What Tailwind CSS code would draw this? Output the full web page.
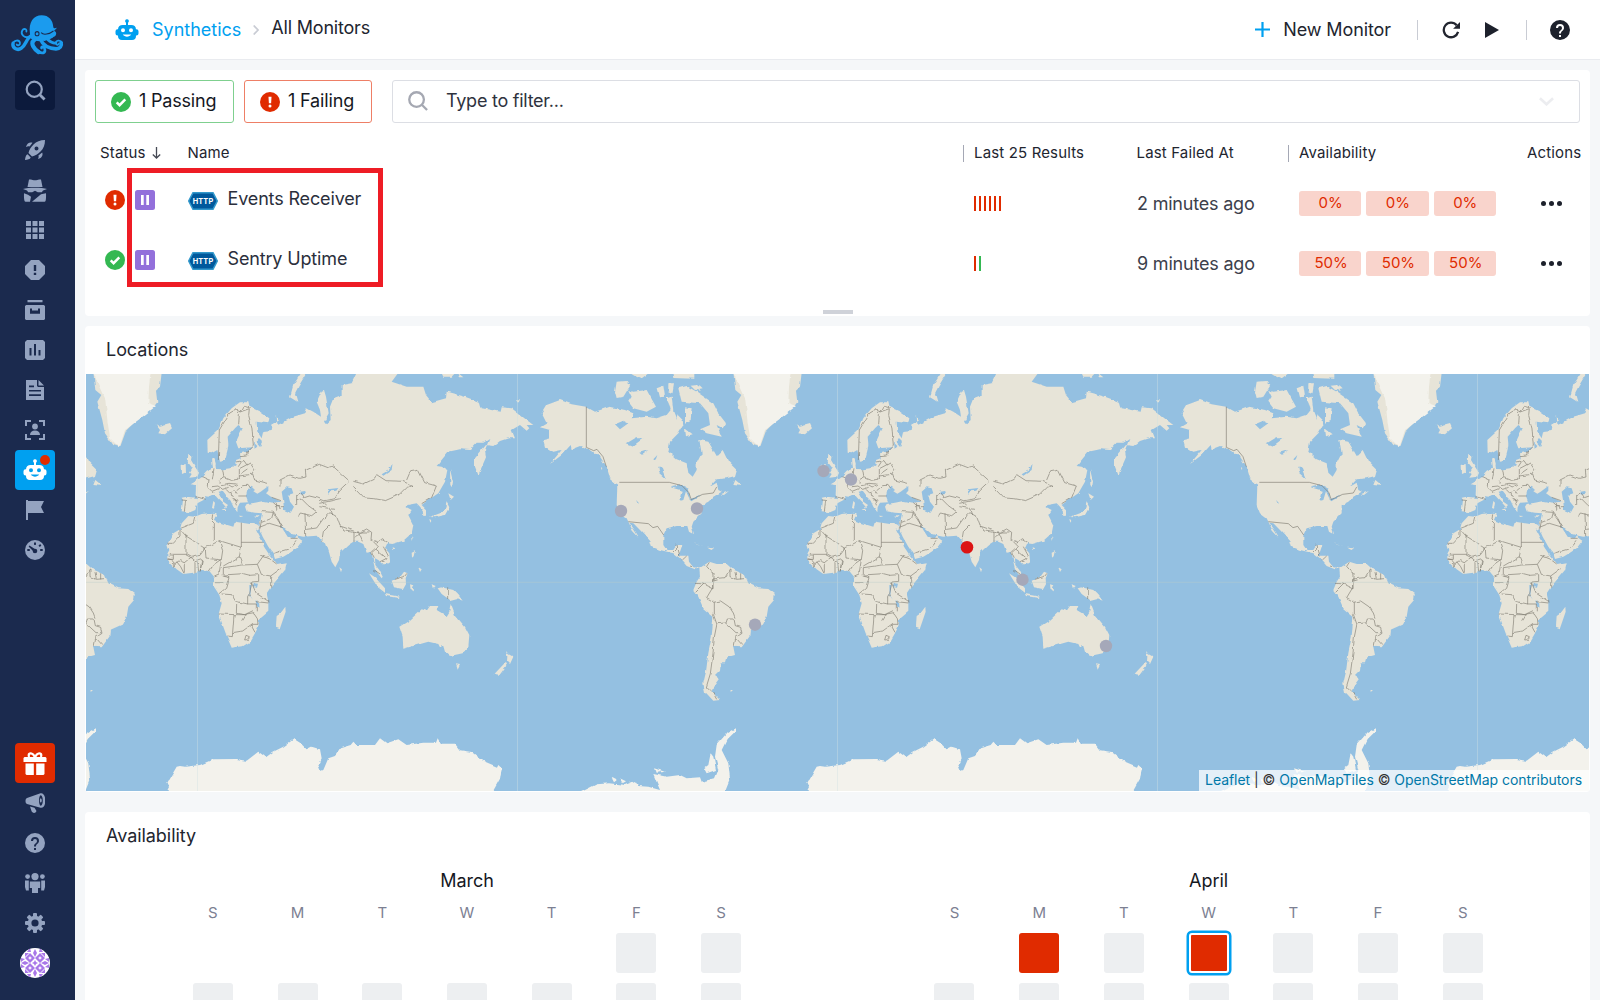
<!DOCTYPE html>
<html lang="en">
<head>
<meta charset="utf-8">
<title>Synthetics - All Monitors</title>
<script src="https://cdn.jsdelivr.net/npm/@tailwindcss/browser@4"></script>
</head>
<body class="bg-[#f5f7f9]">
<svg class="hidden">
  <symbol id="robot" viewBox="0 0 24 24"><path fill="currentColor" fill-rule="evenodd" d="M12 1.2a1.9 1.9 0 0 1 1 3.5V7h3.3A4.700 4.700 0 0 1 21 11.200h.5a2 2 0 0 1 2 2v2.300a2 2 0 0 1-2 2H21V18a4 4 0 0 1-4 4H7a4 4 0 0 1-4-4v-.5h-.5a2 2 0 0 1-2-2v-2.300a2 2 0 0 1 2-2H3A4.700 4.700 0 0 1 7.700 7H11V4.700a1.900 1.900 0 0 1 1-3.500zM8 10.300a2 2 0 1 0 0 4 2 2 0 0 0 0-4zm8 0a2 2 0 1 0 0 4 2 2 0 0 0 0-4zM7.800 16.600c2 2.700 6.400 2.700 8.400 0z"/></symbol>
  <symbol id="ok" viewBox="0 0 20 20"><circle cx="10" cy="10" r="10" fill="#34b852"/><path d="M5.700 10.300l2.900 2.900 5.700-5.800" fill="none" stroke="#fff" stroke-width="2.500"/></symbol>
  <symbol id="bad" viewBox="0 0 20 20"><circle cx="10" cy="10" r="10" fill="#e02b00"/><path d="M8.500 4.700h3l-.4 6.600H8.900z" fill="#fff"/><circle cx="10" cy="14" r="1.500" fill="#fff"/></symbol>
  <symbol id="pause" viewBox="0 0 20 20"><rect width="20" height="20" rx="2.500" fill="#9370db"/><path d="M6 5h2.700v10H6zM11.300 5H14v10h-2.700z" fill="#fff"/></symbol>
  <symbol id="http" viewBox="0 0 30 18"><path d="M5 .7h20L29.300 9 25 17.300H5L.7 9z" fill="#00599c" stroke="#3399cc" stroke-width="1.500"/><text x="15" y="11.900" text-anchor="middle" font-family="Inter,sans-serif" font-size="7.300" font-weight="700" fill="#fff" letter-spacing=".2">HTTP</text></symbol>
  <symbol id="help" viewBox="0 0 20 20"><path fill="currentColor" fill-rule="evenodd" d="M10 0a10 10 0 1 0 0 20 10 10 0 0 0 0-20zM9 15h2v2H9zm2-1.500H9c0-3.300 3-3.100 3-5.500a2 2 0 0 0-4 0H6a4 4 0 0 1 8 0c0 2.500-3 2.800-3 5.500z"/></symbol>
</svg>
<div class="flex h-[1000px] w-[1600px] overflow-hidden font-['Inter',sans-serif] text-[#22252f]">
  <!-- Sidebar -->
  <nav class="flex w-[75px] shrink-0 flex-col bg-[#1b2a4e] pb-[17px] text-[#94a3c0]">
    <div class="flex h-[70px] w-[75px] items-center justify-center">
      <svg class="h-[40px] w-[53px]" viewBox="1 1.200 51.800 37" preserveAspectRatio="none">
        <path fill="#1b9bee" d="M19.500 18C18 8 23 1.500 31 1.500c7 0 10.800 4.500 11.300 10.500.2 1.500 1.500 1.700 3.700 1l-3 3c3 .5 3 4-.5 6l-6 2.500c-6 2-13 1-15.500-1-1-1-1.300-3-1.500-5.500z"/>
        <circle cx="26.500" cy="18.500" r="1.900" fill="#1b9bee" stroke="#1b2a4e" stroke-width="1"/>
        <path d="M30.500 17.500c2 2.500 8 1.500 12-1.500M29.500 25c5 1.500 10 .5 14-3.500" fill="none" stroke="#1b2a4e" stroke-width="1"/>
        <g fill="none" stroke="#1b9bee" stroke-linecap="round" stroke-linejoin="round">
          <path stroke-width="3.300" d="M22 20c-6 1.500-6 9-11 12-4 2.500-9-.5-8-4.500"/>
          <path stroke-width="1.700" d="M3 28c.5-3.500 6-4.500 6.800-1 .3 2-2.300 3-3.200 1.500M20 21c-6 2.500-10-2-8-5.500 1.500-2.500 5-1 4 1"/>
          <path stroke-width="4" d="M24 24c-5 3.500 0 9 4 11.500"/><path stroke-width="2.600" d="M28 35c3 2 7 2 6-2.500-.4-2.300-3-2.500-3.200-.8"/>
          <path stroke-width="3.500" d="M30 24c2 5 8 8 15 8.500 4 0 6-3 5-5.500"/><path stroke-width="1.700" d="M51 27c-1.500-3.200-7-2.500-6 .7.600 1.700 3 1.200 3-.3"/>
          <path stroke-width="2.600" d="M37 24c3 2.500 6 3.500 8 3"/>
        </g>
      </svg>
    </div>
    <div class="ml-[15px] flex size-10 items-center justify-center rounded bg-[#0c1a3c]">
      <svg class="size-[21px]" viewBox="0 0 22 22" fill="none" stroke="currentColor"><circle cx="9.700" cy="9.700" r="7.900" stroke-width="2.300"/><path d="M15.500 15.500l5 5" stroke-width="3"/></svg>
    </div>
    <div class="mt-5 ml-[15px] flex w-10 flex-col [&>div]:flex [&>div]:size-10 [&>div]:items-center [&>div]:justify-center [&_svg]:fill-current">
      <div><svg class="size-5" viewBox="0 0 20 20"><path fill-rule="evenodd" d="M20 0c-5 0-8.500 1.500-11.500 4.500C6 7 4 10 3.500 13L7 16.500c3-.5 6-2.500 8.500-5C18.500 8.500 20 5 20 0zM11.500 6.500a2 2 0 1 1 0 4 2 2 0 0 1 0-4zM7.500 2.800C5 1.800 2 3 1 7c1.600-.8 2.800-.8 3.600-.4zM17.200 12.500c1 2.500-.2 5.500-4.200 6.500.8-1.600.8-2.800.4-3.600zM2.600 14.300C.7 15 .4 17.500 0 20c2.500-.4 5-.7 5.700-2.600z"/></svg></div>
      <div><svg class="h-[23px] w-6" viewBox="0 0 24 23"><path fill-rule="evenodd" d="M6 .5h2c1.500 1 6.500 1 8 0h2l1.500 7.500h-15zM0 10c5-1.700 19-1.700 24 0l-4 1.400-1.200 1.800h-4L12 11.800l-2.800 1.400h-4L4 11.400zM1 14.300l4 1.500 3 2-1 5H2.500c-1.200 0-1.700-3-1.500-8.500zM23 14.300l-5 1-9 7.500h12.700c1.200 0 1.500-3 1.300-8.500z"/></svg></div>
      <div><svg class="size-5" viewBox="0 0 20 20"><path d="M1 1h5v5H1zM7.500 1h5v5h-5zM14 1h5v5h-5zM1 7.500h5v5H1zM7.500 7.500h5v5h-5zM14 7.500h5v5h-5zM1 14h5v5H1zM7.500 14h5v5h-5zM14 14h5v5h-5z"/></svg></div>
      <div><svg class="size-5" viewBox="0 0 20 20"><path fill-rule="evenodd" d="M6 0h8l6 6v8l-6 6H6l-6-6V6zM8.800 5v6h2.400V5zm0 7.700V15h2.400v-2.300z"/></svg></div>
      <div><svg class="size-5" viewBox="0 0 20 20"><path fill-rule="evenodd" d="M2.500 0h15v2.200h-15zM1.200 5h17.600L20 6v13l-1 1H1l-1-1V6zM5 8.500v5.200h10V8.500h-2v2H7v-2z"/></svg></div>
      <div><svg class="size-5" viewBox="0 0 20 20"><path fill-rule="evenodd" d="M2 0h16l2 2v16l-2 2H2l-2-2V2zM4.500 8v7.500h2V8zM9 4v11.500h2V4zM13.500 10v5.500h2V10z"/></svg></div>
      <div><svg class="size-5" viewBox="0 0 20 20"><path fill-rule="evenodd" d="M1 0h11v6l1 1h6v13H1zM13.500 0L19 5.500h-5.500zM4 5.500v1.700h5V5.500zm0 4.500v1.600h12V10zm0 4.300V16h12v-1.700z"/></svg></div>
      <div><svg class="size-5" viewBox="0 0 20 20"><path d="M0 0h6v2H2v4H0zM14 0h6v6h-2V2h-4zM0 14h2v4h4v2H0zM18 14h2v6h-6v-2h4z"/><circle cx="10" cy="6.500" r="2.900"/><path d="M5 15c0-3 2-4.500 5-4.500s5 1.500 5 4.500z"/></svg></div>
      <div class="relative rounded bg-[#00a0f0] text-white"><svg class="size-6"><use href="#robot"/></svg><span class="absolute top-[5px] left-[25px] size-[10px] rounded-full bg-[#e02b00]"></span></div>
      <div><svg class="size-5" viewBox="0 0 20 20"><path d="M1 0h2v1h16l-3 6 3 6H3v7H1z"/></svg></div>
      <div><svg class="size-5" viewBox="0 0 20 20"><circle cx="10" cy="10" r="10"/><g fill="#1b2a4e"><circle cx="10" cy="11" r="2.300"/><path d="M9 12L3.600 6.400l.9-.9L11 9.800z"/><rect x="9" y="2.500" width="2" height="2.400"/><rect x="2.300" y="9" width="2.500" height="2"/><rect x="15.200" y="9" width="2.500" height="2"/><path d="M13.500 5.700l1.600-1.600 1.300 1.300-1.600 1.600z"/></g></svg></div>
    </div>
    <div class="mt-auto ml-[15px] flex w-10 flex-col [&>div]:flex [&>div]:size-10 [&>div]:items-center [&>div]:justify-center [&_svg]:fill-current">
      <div class="rounded bg-[#e02b00] text-white"><svg class="size-6" viewBox="0 0 24 24"><path fill-rule="evenodd" d="M5 6C3 1 9-.5 12 4c3-4.500 9-3 7 2h3.500l1 1v4H.5V7l1-1zm2 0h3.500C9.500 3 6 2.500 7 6zm10 0c1-3.500-2.500-3-3.500 0zM2.500 12.500h8.300V24H3.500l-1-1zM13.200 12.500h8.300V23l-1 1h-7.300z"/></svg></div>
      <div><svg class="size-5" viewBox="0 0 20 20"><path fill-rule="evenodd" d="M2 5L15.500.2C22-.8 22 16 15.500 14.800L2 11C0 10.500 0 5.600 2 5zm13.700-2.700c-2.200 0-2.200 10.400 0 10.400 2.800 0 2.800-10.400 0-10.400zm-.2 3c1.700 0 1.700 4.200 0 4.200-.8-1-.8-3.200 0-4.200zM5 13.500l4.500 1.300 2 3.200c-1 3-4.500 2-5 0z"/></svg></div>
      <div><svg class="size-5"><use href="#help"/></svg></div>
      <div><svg class="size-5" viewBox="0 0 20 20"><circle cx="10" cy="3.600" r="3.600"/><circle cx="2.600" cy="3.600" r="2.400"/><circle cx="17.400" cy="3.600" r="2.400"/><path d="M4.800 8.500h10.400V15H13v5H7v-5H4.800zM0 7.500h3.800V17.500H1L0 14zM16.200 7.500H20V14l-1 3.500h-2.800z"/></svg></div>
      <div><svg class="size-5" viewBox="0 0 20 20"><g><rect x="8" width="4" height="20" rx="1"/><rect x="8" width="4" height="20" rx="1" transform="rotate(45 10 10)"/><rect x="8" width="4" height="20" rx="1" transform="rotate(90 10 10)"/><rect x="8" width="4" height="20" rx="1" transform="rotate(135 10 10)"/><circle cx="10" cy="10" r="7.300"/></g><circle cx="10" cy="10" r="3.600" fill="#1b2a4e"/></svg></div>
      <div><svg class="size-[30px] rounded-full bg-white" viewBox="0 0 30 30"><g fill="#a877e8"><path d="M10 5l5 5-5 5-5-5zM20 5l5 5-5 5-5-5zM10 15l5 5-5 5-5-5zM20 15l5 5-5 5-5-5z"/><path d="M5 5l4 0-4 4zM25 5h-4l4 4zM5 25h4l-4-4zM25 25h-4l4-4zM15 1l2 4-2 4-2-4zM15 21l2 4-2 4-2-4zM1 15l4-2 4 2-4 2zM21 15l4-2 4 2-4 2zM15 12l1 2 2 1-2 1-1 2-1-2-2-1 2-1zM1 10l4 1-4 3zM29 10l-4 1 4 3zM1 20l4-1-4-3zM29 20l-4-1 4-3zM10 0l1 4-4 0zM20 0l-1 4h4zM10 30l1-4H7zM20 30l-1-4h4z"/></g><g fill="#fff"><path d="M10 8l.7 1.300L12 10l-1.300.7L10 12l-.7-1.300L8 10l1.300-.7zM20 8l.7 1.300L22 10l-1.300.7L20 12l-.7-1.300L18 10l1.300-.7zM10 18l.7 1.300L12 20l-1.300.7L10 22l-.7-1.300L8 20l1.300-.7zM20 18l.7 1.300L22 20l-1.300.7L20 22l-.7-1.300L18 20l1.300-.7z"/></g></svg></div>
    </div>
  </nav>

  <div class="flex min-w-0 flex-1 flex-col">
    <!-- Header -->
    <header class="flex h-[60px] shrink-0 items-center border-b border-[#e9ebef] bg-white pr-[30px] pl-10 text-[18px] tracking-[-0.1px]">
      <svg class="size-6 text-[#00a0f0]"><use href="#robot"/></svg>
      <span class="ml-[13px] tracking-[0px] text-[#00a0f0]">Synthetics</span>
      <svg class="ml-3 h-[10px] w-[6px]" viewBox="0 0 6 10" fill="none" stroke="#c9ccd4" stroke-width="1.700"><path d="M.7.500L5 5 .7 9.500"/></svg>
      <span class="mb-[4px] ml-3 tracking-[-0.200px]">All Monitors</span>
      <svg class="ml-auto size-[15px]" viewBox="0 0 15 15" stroke="#00a0f0" stroke-width="2.200"><path d="M7.500 0v15M0 7.500h15"/></svg>
      <span class="ml-[13px]">New Monitor</span>
      <span class="ml-[26px] h-5 w-px bg-[#c9ccd4]"></span>
      <svg class="ml-6 size-[18px]" viewBox="0 0 19 19"><path d="M17 11.500A7.700 7.700 0 1 1 15.500 4.500" fill="none" stroke="#22252f" stroke-width="2.400"/><path d="M19 1v7.300h-7.300z" fill="#22252f"/></svg>
      <svg class="ml-[25px] h-4 w-[14px]" viewBox="0 0 14 16"><path d="M0 0L14 8 0 16z" fill="#1d212c"/></svg>
      <span class="ml-[27px] h-5 w-px bg-[#c9ccd4]"></span>
      <svg class="ml-[23px] size-5 text-[#1d212c]"><use href="#help"/></svg>
    </header>

    <main class="flex flex-col pt-[10px] pl-[10px]">
      <!-- Monitor list -->
      <section class="relative h-[246px] w-[1505px] rounded bg-white">
        <div class="flex h-[53px] items-end pl-[10px] text-[18px] text-[#15181f]">
          <div class="flex h-[43px] w-[139px] items-center rounded-[3px] border border-[#7fd08f] pb-[2px] pl-[15px] tracking-[-0.200px]"><svg class="mt-[2px] mr-2 size-5"><use href="#ok"/></svg>1 Passing</div>
          <div class="ml-[10px] flex h-[43px] w-[128px] items-center rounded-[3px] border border-[#ee7f66] pb-[2px] pl-[15px] tracking-[-0.150px]"><svg class="mt-[2px] mr-2 size-5"><use href="#bad"/></svg>1 Failing</div>
          <div class="ml-5 flex h-[43px] w-[1188px] items-center rounded-[3px] border border-[#dcdee4] pr-[25px] pb-[2px] pl-[15px] tracking-[-0.250px] text-[#2f333e]"><svg class="mt-px mr-[18px] size-5" viewBox="0 0 21 21" fill="none" stroke="#a5a8b2" stroke-width="2.400"><circle cx="9" cy="9" r="7.700"/><path d="M14.500 14.500l5.500 5.500"/></svg>Type to filter...<svg class="mt-[2px] ml-auto h-[9px] w-[15px]" viewBox="0 0 16 9" fill="none" stroke="#ecedf0" stroke-width="2.800"><path d="M1 1l7 6.500L15 1"/></svg></div>
        </div>
        <div class="grid h-[60px] grid-cols-[87px_787px_162px_163px_198px_1fr] items-center pl-[15px] text-[15px] tracking-[0.150px]">
          <div class="flex items-center">Status<svg class="ml-[6px] h-3 w-[9px]" viewBox="0 0 9 12" fill="none" stroke="#454954" stroke-width="1.300"><path d="M4.500 0v11M.8 7.500L4.500 11l3.700-3.500"/></svg></div>
          <div class="flex items-center justify-between pl-[0.500px]">Name<span class="mr-[10px] h-[17px] w-px bg-[#a5a8b5]"></span></div>
          <div>Last 25 Results</div>
          <div class="flex items-center justify-between pl-[0.500px]">Last Failed At<span class="mr-[10px] h-[17px] w-px bg-[#a5a8b5]"></span></div>
          <div>Availability</div>
          <div class="pl-[30px]">Actions</div>
        </div>
        <div class="grid h-[60px] grid-cols-[82px_787px_162px_163px_198px_1fr] pl-5 text-[18px] text-[#3c404b] [&>div]:flex">
          <div class="gap-[10px] pt-[7px]"><svg class="size-5"><use href="#bad"/></svg><svg class="size-5"><use href="#pause"/></svg></div>
          <div class="pt-[2px] tracking-[-0.150px] text-[#2b2f3c]"><svg class="mt-[7px] mr-[9.500px] ml-[1px] h-[18px] w-[30px]"><use href="#http"/></svg>Events Receiver</div>
          <div class="gap-[3px] pt-[13px] [&>i]:h-[15px] [&>i]:w-[2px] [&>i]:bg-[#e02b00]"><i></i><i></i><i></i><i></i><i></i><i></i></div>
          <div class="pt-[7px] pl-[1px] tracking-[-0.200px]">2 minutes ago</div>
          <div class="gap-[5px] pt-2 text-[15px] text-[#e02b00] [&>b]:h-[25px] [&>b]:w-[62.300px] [&>b]:rounded-[3px] [&>b]:bg-[#f9d4cc] [&>b]:pl-px [&>b]:text-center [&>b]:leading-6 [&>b]:font-normal"><b>0%</b><b>0%</b><b>0%</b></div>
          <div class="gap-[3px] pt-[18px] pl-11 [&>i]:size-[5px] [&>i]:rounded-full [&>i]:bg-[#1d212c]"><i></i><i></i><i></i></div>
        </div>
        <div class="grid h-[60px] grid-cols-[82px_787px_162px_163px_198px_1fr] pl-5 text-[18px] text-[#3c404b] [&>div]:flex">
          <div class="gap-[10px] pt-[7px]"><svg class="size-5"><use href="#ok"/></svg><svg class="size-5"><use href="#pause"/></svg></div>
          <div class="pt-[2px] tracking-[-0.150px] text-[#2b2f3c]"><svg class="mt-[7px] mr-[9.500px] ml-[1px] h-[18px] w-[30px]"><use href="#http"/></svg>Sentry Uptime</div>
          <div class="gap-[3px] pt-[13px]"><i class="h-[15px] w-[2px] bg-[#e02b00]"></i><i class="h-[15px] w-[2px] bg-[#34b852]"></i></div>
          <div class="pt-[7px] pl-[1px] tracking-[-0.200px]">9 minutes ago</div>
          <div class="gap-[5px] pt-2 text-[15px] text-[#e02b00] [&>b]:h-[25px] [&>b]:w-[62.300px] [&>b]:rounded-[3px] [&>b]:bg-[#f9d4cc] [&>b]:pl-[2px] [&>b]:text-center [&>b]:leading-6 [&>b]:font-normal"><b>50%</b><b>50%</b><b>50%</b></div>
          <div class="gap-[3px] pt-[18px] pl-11 [&>i]:size-[5px] [&>i]:rounded-full [&>i]:bg-[#1d212c]"><i></i><i></i><i></i></div>
        </div>
        <div class="mx-auto mt-[7px] h-[4px] w-[30px] bg-[#cfd2d9]"></div>
        <div class="absolute top-[98px] left-[42px] h-[119px] w-64 border-5 border-[#ee1c25]"></div>
      </section>

      <!-- Locations map -->
      <section class="mt-[10px] h-[466px] w-[1505px] rounded bg-white px-px">
        <h2 class="h-12 pl-5 text-[18px] leading-[48px] tracking-[-0.050px]">Locations</h2>
        <div class="relative h-[417px] w-[1503px] overflow-hidden bg-[#94c0e1]">
          <svg class="block h-[417px] w-[1503px]" viewBox="0 0 1503 417">
            <defs>
              <filter id="coast" x="-5%" y="-5%" width="110%" height="110%"><feTurbulence type="fractalNoise" baseFrequency=".13" numOctaves="2" seed="4"/><feDisplacementMap in="SourceGraphic" scale="3.200" xChannelSelector="R" yChannelSelector="G"/></filter>
              <g id="world">
                <g filter="url(#coast)">
                <!-- Europe, Asia, Africa, Oceania -->
                <g transform="translate(694 -4) scale(.33333)">
                  <g fill="#e7e4d8">
                    <path d="M152 343L168 345 167 375 172 384 140 380 125 383 129 390 125 424 150 427 166 420 172 400 195 388 192 378 205 380 222 372 233 385 245 397 258 412 264 405 250 395 240 378 233 365 246 362 258 378 272 392 280 410 292 427 293 412 300 398 325 397 318 378 322 362 335 350 345 360 340 364 352 371 362 365 385 348 385 362 378 370 395 382 425 395 400 398 370 393 345 398 320 402 315 410 320 424 345 428 366 430 362 450 357 475 368 500 385 530 400 552 405 567 430 560 450 548 470 535 487 512 470 500 465 508 445 503 430 480 425 470 435 475 455 492 475 497 490 500 530 497 545 515 558 520 568 550 575 575 586 592 597 570 600 548 625 525 640 515 655 515 670 522 680 548 695 545 700 575 704 592 712 608 725 625 728 620 718 600 706 585 705 565 715 570 730 585 750 572 748 550 735 535 742 520 757 522 790 512 815 490 820 465 805 435 815 420 800 412 802 405 818 402 830 400 838 408 848 420 850 438 858 437 858 418 845 405 865 390 895 370 915 335 922 300 905 290 890 288 925 245 960 238 990 240 1010 218 1030 218 1048 207 1035 240 1038 262 1015 315 1005 290 1005 265 1038 225 1060 228 1080 213 1105 205 1125 205 1115 180 1140 165 1160 182 1168 175 1160 165 1180 165 1160 150 1115 115 1085 112 1082 125 1025 115 1020 97 975 80 920 65 918 85 875 97 858 75 850 50 800 50 755 35 775 8 650 8 635 40 605 45 605 75 580 85 570 110 572 150 558 163 552 155 566 130 558 80 552 60 545 62 530 95 540 120 543 140 520 125 500 115 495 130 460 140 425 160 412 165 410 135 418 150 398 165 395 180 370 183 365 205 352 185 350 155 385 160 388 145 360 125 328 110 325 97 300 97 275 115 250 145 235 180 202 210 203 248 215 250 232 240 240 275 255 272 262 245 265 222 263 200 285 175 295 165 308 175 300 190 288 215 295 235 335 232 322 245 300 250 302 265 288 270 290 285 280 293 250 298 228 297 224 265 217 270 219 295 200 305 185 322 165 335z"/>
                    <path d="M145 438L165 440 185 432 220 428 230 430 222 450 240 458 280 470 285 455 330 462 345 462 357 468 356 480 347 475 365 510 372 530 385 550 400 568 412 582 440 577 435 600 410 630 390 655 380 670 385 695 385 722 358 745 355 770 345 790 330 815 310 828 275 833 260 798 248 765 236 732 245 700 238 675 222 650 222 620 208 603 185 600 160 608 130 612 110 598 92 580 82 568 82 552 88 540 82 522 100 490 120 478 125 460z"/>
                    <path d="M436 710l1 15-17 50-12-5 2-35 15-10zM145 250l10 8-2 12 12 20 12 18-5 12-24 3 7-11-5-4 8-13-8-10-7-10zM125 285l12-3 1 25-12 5zM47 163l13 7 30-8 6 13-21 18-20-3 5-10zM484 8l16 0-25 42-10 20 7 25-22-13 10-37zM905 10h40l-10 10h-25zM955 10l15 12h-10zM687 610l18 12 30 33v13l-23-18zM735 672l45 8-5 4-37-6zM755 632l25-10 12-17 11 5-6 15 1 15-10 17-26-5zM810 643l10 3-4 6 4 12-8-4zM815 545l10-4-4 18-5 4zM835 592l10 6-5 8zM814 503l4 0-3 10zM755 532l8 3-6 5zM598 592l8 6-3 9zM875 643l12 5-8 8zM893 655l12-3 35 8 15 15 13 17-18-7-20 5-25-18zM925 370l17 10-10 10zM920 397l8 15-13 23-30 7-15-1 30-11 14-12zM868 447l7 4-4 7zM930 298l9 37-3 17-5-7zM217 268l6-3 4 18-8 8zM245 415l15-2-2 9zM220 393l5 5-3 18-6-2zM296 437l14 1-8 3zM345 437l14-2-6 6z"/>
                    <path d="M932 702l13 33 30 35 13 25-3 35-17 20-38 8-15-13-7-23-8 10-5-10-30-7-35 10-40 11-2-36-10-30 32-20 35-32 15 4 10-14h25l-5 12 30 18 8-13zM948 880l12 2-7 14zM1098 843l8 10 14 7-10 22-9-9 1-14zM1095 878l4 9-22 30-16-3z"/>
                  </g>
                  <path fill="#94c0e1" d="M425 365l15-13 15 3 5 15-15 5 5 20 12 15-10 18-20-8-2-25zM758 278l-3 22-25 17-5-4 22-13zM563 358l32-4-6 8-17 2-7 11zM478 362l14-2 3 12-12 2zM342 215l10 10-8 12zM354 204l12 12-6 12-7-8zM328 645l6 0-3 32 8 12-10-12zM342 640l12 1-3 12-12-2zM350 690l7 6 2 20-6-4z"/>
                  <path fill="#f3f2ec" d="M75 1275l15-30-8-7 28-48 10-2 15 2 45-5 40-17 70-1 30 5 35-27 23 17 22-17 30-15 32-23 18 11 20 20 15-8 25 8 5 27-10 20 7 18 8-3 15-35 20-7 15-23 32-10 8-10 10 10h55l15-20 20 15 35-12 25 17 50-7h38l5-13 9 16h43l15 20 35 5 35 27 55 23-5 30-28 50z"/>
                </g>
                <!-- Americas -->
                <g transform="translate(414 -4) scale(.33333)">
                  <g fill="#e7e4d8">
                    <path d="M140 105L180 90 215 103 258 110 285 125 330 110 375 120 400 130 395 145 440 140 470 145 500 135 512 120 500 85 515 80 520 125 530 150 528 130 548 150 550 165 535 190 510 215 505 245 530 268 560 280 565 308 578 320 590 300 590 280 605 250 598 210 625 215 640 240 650 258 668 240 685 275 710 300 705 318 680 325 650 328 630 350 650 338 655 360 665 365 640 380 625 395 605 405 605 430 580 455 575 470 582 492 570 485 565 468 530 468 500 475 490 495 490 525 500 540 520 540 530 525 547 525 540 545 535 557 565 557 567 575 580 592 600 595 585 598 560 588 540 565 520 550 480 540 455 530 450 512 425 485 400 460 388 458 400 475 418 503 398 482 380 445 360 430 350 405 352 345 330 325 320 290 300 260 265 238 240 228 215 238 212 225 185 255 150 282 185 240 160 245 135 230 130 210 150 205 150 180 120 172 140 160 125 130z"/>
                    <path d="M598 595l30-20 22 7h30l20 18 35 15 10 25 30 15 30 2 20 15-3 18-17 20-5 30-10 22-40 18-2 20-23 32-25-2 5 25-25 7-5 18h-13l-2 20-15 15 13 10-18 25-5 15 25 25-20 2-25-27-5-25 8-35 7-55 10-50 5-60-30-25-15-35-15-20 10-25 10-15z"/>
                    <path d="M535 55l25-7 30 17 50 35 15 30 23 30-10 15-18-10 15 35-45-10-20-12 30-13-5-35-25-30-55-5zM572 47l20-2 10 18-18-4zM385 60l15 5 40-5 28 50-28 15-40-10-15-20 10-15zM350 35l30-2 10 15-20 32-20 4-5-19zM520 8h63v18l-60-2zM388 8h60l-25 18-20-9zM505 40l17 0-5 30-12-6zM470 55l20-8 5 33-18 2zM555 112l20 3-3 35-17 8zM555 175l23 18-20 6zM598 45l10 10-12 2zM706 330l22 18-28-3zM662 373l25-10-15 12zM580 517l28 10-20-8zM622 533l20 2-8 5zM687 960h12l-6 5zM48 88l12 0-6 7zM345 340l-15-12 5-3 22 20zM303 292l4 8-3 2z"/>
                    <path d="M700 8h205l-5 42-12 12 4 35-12 15 8-5-60 45-30 30-18 50-20-7-25-35-8-40-15-55 12-20-18-15z"/>
                  </g>
                  <path fill="#f3f2ec" d="M700 8l18 42 18 40 6 60 8 55 28 27 17-52 40-30 53-42-23-8 2-50 5-42zM225 1275l65-32 40-3 45 5 30-12 10 15 30 2 35 10-20-48 40 8 40-5 20 10 40-3 5 13 40-10 10-25-10-40 5-35 30-35 25-15v10l-25 25-15 30 20 40 5 45-20 50zM632 1150l8 10 8 40-28 10-8-15 13-10zM465 1195l33 10-28 3zM335 1223l15 8-8 6zM358 1224l20 10-10 6zM-15 1205l10-20 10 10-4 22z"/>
                  <path fill="#94c0e1" d="M345 163l25-11 15 8-25 18zM380 220l25-15h25l-30 22zM418 248l27-8-20 14zM460 268l12-13-6 18zM475 290h8l15 37-20-17zM512 352l33-7 22 12 3 33-12-26-8 26-9 2 7-30zM568 388l36-12-30 18zM408 390l8 8-2 5zM505 95l6 20-5 5z"/>
                </g>
                <!-- Country borders of Eurasia and Africa -->
                <g transform="translate(694 -4) scale(.33333)" fill="none" stroke="#77736a" stroke-opacity=".6" stroke-width="3" stroke-linejoin="round">
                  <path d="M235 270l3-90 30-50 20-12 12 8 28-10-2 20 10 40 4 50-22 22M284 118l14 15-2 30M299 126l10-18 18 5M125 390l12 1-4 34M167 380l30 8M185 320l22 10-3 22 12 12 20-8M222 298l-5 30M248 298l4 25-15 8M252 322l22 9 24-4v-30M235 332l12 12 20-4 20 2M216 350l18-2 14 10 18-6M262 342l16 10 16-10M258 358l12 12 12-8 10 8M272 368l8 22 14 4M283 385l6 24M295 378h25M290 362l18-15 16-1 8 12M298 318l40-6 6 18 40 10M300 295l30-16 14 20-10 14M290 276l22-4 8 12M295 290l10-16M300 260l20-2 2-15M300 312l22-15M395 382l28 10M400 398l22 18M405 410l28 0M410 398l0 24"/>
                  <path d="M420 350l0-20 30-15 30 10 18-4-2-20 42-18 26 10 14-5 50 45-30 28-15 25-30 6-20-8-25-6-15 5-10-16-13 6v32M640 334l30 8 30-14 10-14 28 18 50 2 28 12-14 6-20 20-46 20-32-6-30-2-34-35M800 330l12-28 22-4 20 40 35 10-14 35-30 18M470 392l15-5 20 20 25 18-15 12-34-8-5 8M495 430l2 70M500 478l30-4 20-28 20-18 20 12 10 28 52 18 36 0M545 515l5-30 20-20M600 468l12 15 40 5M642 486l0 30M655 486l12 28M645 505l20-20 15-8 15 10-2 22 22 8M700 515l15 15-20 18 8 15M705 535l35 30-20 10M710 520l15-12 20 12M730 530l15 28M538 400l65-14M540 390l20 15M535 410l50 8M570 410l8 25M365 425l35 2-5 18-30 12M400 430l28 42-40-12-30 12M425 472l-12-30-15-20M365 450l-6 28M400 550l42-12 18-12 8-12M455 508l18 0M765 628l28-8 8-10M923 652v37M700 598l20 14"/>
                  <path d="M165 440l-5 20-38 15M100 520h-18M120 478l18 20v55h-45l-6 4M120 478l0 20-20 22M138 498l58 36 42-22 66 20M215 430l-2 20 10 10v52M304 458v74M304 517h64M196 534l-16 22-28 6-15-8M196 534l2 30 45 6M238 512l10 30-6 40-5 30-14 6M304 530l-6 30-48 28M298 560l10 25-58 8 0 20M308 585l44-2 20-28 14 4M352 583l12 30 28 5 30-22M360 555l30 12 20 15M250 615l60-4 20 5M245 615l22 5-10 35-20 16M225 638l25 0M328 616l28-2 0 20-20 2-8 38M392 618v35M335 640l14 30 38 25 0 3M245 672l30 2 12 20 36 8 0-22 10-5M290 702l-1 28 25 4 25-12M236 732l52 2 30 0M282 735l-5 65-15-2M278 788l30-5 28-20 18 0-2-20-10-15-22 4-12 20M333 765l12 22M322 702l30 0 0 22M350 695l35 4M314 810l4-14 10 4-6 9zM110 575l12 15 10 20M83 566l15 4 8 10 12-8 15 6 0 30M133 578l20-16 12 10 20-6-4 38M165 575l0 32M172 572l4 32M188 568l-8 36M96 580l10 2-5 8M208 603l14-20 20-14M330 640l6-2M86 558h14v10h-18"/>
                </g>
                <!-- Country borders of South America -->
                <g transform="translate(414 -4) scale(.33333)" fill="none" stroke="#77736a" stroke-opacity=".6" stroke-width="3">
                  <path d="M628 577l-8 12 10 12 12 8 0 24 12-4M585 640l24 2 30 15 0-30 36-4 14-24M609 642l-22 22M638 628l0 25-18 30 14 8 6 5M690 600l0 20 20 8 22-2M705 606l4 20M722 610l0 18M640 697l22-4 26 18 12 18 5 14M643 697v36M640 733l10 28 28-2 4-12 20 0 4 20 16 5 4 18-18 12-6 28M678 760l30 28 16 0M706 802l20 22M651 761l-8 40-4 50-8 60-12 40 14 14M638 966l12 22M520 548l10-10-2-14M535 540l5 20M545 572l15-14M570 588l6 2"/>
                </g>
                </g>
                <g transform="translate(414 -4) scale(.33333)" fill="none" stroke="#77736a" stroke-opacity=".6" stroke-width="3">
                  <path d="M259 110v122l22 10 10-4 18 22 10 30M358 337h150l38 10 20 20 8 22 34-16 32-4 10-18M385 455l60 6 14 12 14-4 18 26"/>
                </g>
                <path d="M751.500 0v417M431.500 0v417" stroke="#cfe0e3" stroke-opacity=".4" fill="none"/>
              </g>
            </defs>
            <use href="#world" x="-1280"/><use href="#world" x="-640"/><use href="#world"/><use href="#world" x="640"/>
            <path d="M0 208.300H1503" stroke="#b9ccc9" stroke-opacity=".4"/>
            <g fill="#a5a8b9"><circle cx="535" cy="137" r="6.200"/><circle cx="611" cy="134.500" r="6.200"/><circle cx="669" cy="250.700" r="6.200"/><circle cx="737.500" cy="97" r="6.200"/><circle cx="765" cy="105.500" r="6.200"/><circle cx="936.500" cy="205.700" r="6.200"/><circle cx="1020" cy="272" r="6.200"/></g>
            <circle cx="881" cy="173.300" r="6.300" fill="#dc1414"/>
          </svg>
          <div class="absolute right-0 bottom-0 h-[21px] w-[390px] bg-white/75 pl-[6px] text-[14px] leading-[20px] tracking-[-0.040px] whitespace-nowrap text-[#333] [&>a]:text-[#0078a8]"><a>Leaflet</a> | © <a>OpenMapTiles</a> © <a>OpenStreetMap contributors</a></div>
        </div>
      </section>

      <!-- Availability calendar -->
      <section class="mt-5 h-[200px] w-[1505px] overflow-hidden rounded bg-white">
        <h2 class="h-[54px] pl-[21px] text-[18px] leading-[48px] tracking-[-0.050px]">Availability</h2>
        <div id="months" class="flex gap-[148.600px] pl-[85.500px]"></div>
      </section>
    </main>
  </div>
</div>
<script>
const months = [
  { name: 'March', first: ['', '', '', '', '', 'n', 'n'] },
  { name: 'April', first: ['', 'f', 'n', 'today', 'n', 'n', 'n'] },
];
const look = {
  '': '',
  n: 'bg-[#edeff1]',
  f: 'bg-[#e02b00]',
  today: 'border-2 border-white bg-[#e02b00] ring-[2.500px] ring-[#00a0f0]',
};
const cell = s => `<div class="size-10 rounded-[3px] ${look[s]}"></div>`;
document.getElementById('months').innerHTML = months.map(m => `
  <div class="w-[593px] shrink-0">
    <div class="h-[29px] text-center text-[18px] leading-[29px] tracking-[-0.050px] text-[#15181f]">${m.name}</div>
    <div class="grid grid-cols-7 justify-items-center gap-y-[10px] text-[15px] text-[#7c8092]">
      ${[...'SMTWTFS'].map(d => `<div class="h-7 leading-[36px]">${d}</div>`).join('')}
      ${m.first.map(cell).join('')}${cell('n').repeat(7)}
    </div>
  </div>`).join('');
</script>
</body>
</html>
